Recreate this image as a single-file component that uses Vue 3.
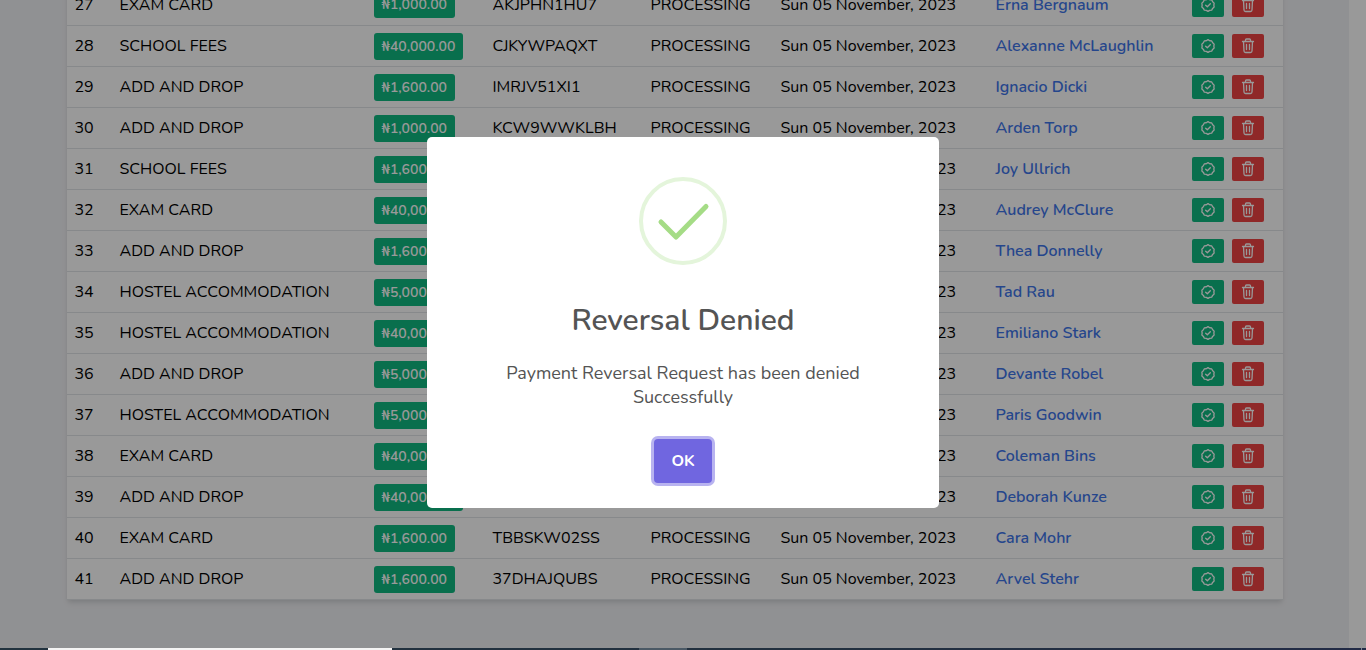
<script setup>
const rows = [
  [27, 'EXAM CARD', '1,000.00', 'AKJPHN1HU7', 'Erna Bergnaum'],
  [28, 'SCHOOL FEES', '40,000.00', 'CJKYWPAQXT', 'Alexanne McLaughlin'],
  [29, 'ADD AND DROP', '1,600.00', 'IMRJV51XI1', 'Ignacio Dicki'],
  [30, 'ADD AND DROP', '1,000.00', 'KCW9WWKLBH', 'Arden Torp'],
  [31, 'SCHOOL FEES', '1,600.00', '', 'Joy Ullrich'],
  [32, 'EXAM CARD', '40,000.00', '', 'Audrey McClure'],
  [33, 'ADD AND DROP', '1,600.00', '', 'Thea Donnelly'],
  [34, 'HOSTEL ACCOMMODATION', '5,000.00', '', 'Tad Rau'],
  [35, 'HOSTEL ACCOMMODATION', '40,000.00', '', 'Emiliano Stark'],
  [36, 'ADD AND DROP', '5,000.00', '', 'Devante Robel'],
  [37, 'HOSTEL ACCOMMODATION', '5,000.00', '', 'Paris Goodwin'],
  [38, 'EXAM CARD', '40,000.00', '', 'Coleman Bins'],
  [39, 'ADD AND DROP', '40,000.00', '', 'Deborah Kunze'],
  [40, 'EXAM CARD', '1,600.00', 'TBBSKW02SS', 'Cara Mohr'],
  [41, 'ADD AND DROP', '1,600.00', '37DHAJQUBS', 'Arvel Stehr'],
].map(([id, purpose, amount, reference, student]) => ({ id, purpose, amount, reference, student }))
</script>

<template>
  <div class="screen">
    <div class="viewport">
      <main class="page">
        <div class="card">
          <table>
            <colgroup>
              <col class="c-id" /><col class="c-purpose" /><col class="c-amount" /><col class="c-ref" />
              <col class="c-status" /><col class="c-date" /><col class="c-student" /><col />
            </colgroup>
            <tbody>
              <tr v-for="row in rows" :key="row.id">
                <td>{{ row.id }}</td>
                <td>{{ row.purpose }}</td>
                <td><span class="amount">₦{{ row.amount }}</span></td>
                <td>{{ row.reference }}</td>
                <td>PROCESSING</td>
                <td>Sun 05 November, 2023</td>
                <td><a href="#">{{ row.student }}</a></td>
                <td>
                  <div class="actions">
                    <button class="approve" type="button" aria-label="Approve">
                      <svg viewBox="0 0 24 24" width="16" height="16">
                        <path d="M12 2.5l2.6 1.6 3 .3 1.4 2.7 2.2 2.1-.4 3 .4 2.9-2.3 2-1.4 2.7-3 .2L12 21.5 9.500 20l-3-.2-1.400-2.700-2.300-2 .4-2.900-.4-3L5 7.100l1.400-2.700 3-.3z" />
                        <path d="M8.500 12.300l2.500 2.300 4.500-4.600" />
                      </svg>
                    </button>
                    <button class="deny" type="button" aria-label="Deny">
                      <svg viewBox="0 0 16 16" width="16" height="16">
                        <path d="M2.500 3.500h11M5.500 3.500V2q0-1 1-1h3q1 0 1 1v1.500M3.500 3.500l.5 9.500q.1 1.500 1.500 1.500h5q1.400 0 1.500-1.500l.5-9.500M6.500 6.500v5M9.500 6.500v5" />
                      </svg>
                    </button>
                  </div>
                </td>
              </tr>
            </tbody>
          </table>
        </div>
      </main>
      <div class="gutter"></div>
    </div>
    <div class="taskbar">
      <span class="start"></span><span class="search"></span><span class="pinned"></span><span class="active"></span><span class="tray"></span>
    </div>
    <div class="backdrop">
      <div class="dialog" role="dialog" aria-modal="true" aria-labelledby="dialog-title">
        <svg class="success" viewBox="0 0 88 88" width="88" height="88">
          <circle cx="44" cy="44" r="42" />
          <path d="M22 45l15 15 30-30.500" />
        </svg>
        <h2 id="dialog-title">Reversal Denied</h2>
        <p>Payment Reversal Request has been denied Successfully</p>
        <button class="ok" type="button">OK</button>
      </div>
    </div>
  </div>
</template>

<style>
body { margin: 0; }
</style>

<style scoped>
* { box-sizing: border-box; }
.screen {
  height: 100vh;
  display: flex;
  flex-direction: column;
  overflow: hidden;
  font-family: Nunito, "Open Sans", "Noto Sans", sans-serif;
  font-size: 16px;
  line-height: 24px;
  color: #000;
}
.viewport { flex: 1; min-height: 0; display: flex; background: #f1f2f5; }
.page {
  flex: 1;
  min-width: 0;
  display: flex;
  flex-direction: column;
  justify-content: flex-end;
  align-items: center;
  padding: 0 32px 48px;
}
.gutter { width: 17px; background: #fff; }
.card {
  width: 100%;
  max-width: 1216px;
  background: #fff;
  box-shadow: 0 4px 6px -1px rgba(0, 0, 0, 0.1), 0 2px 4px -1px rgba(0, 0, 0, 0.06);
}
table { width: 100%; table-layout: fixed; border-collapse: collapse; }
.c-id { width: 45px; }
.c-purpose { width: 254px; }
.c-amount { width: 119px; }
.c-ref { width: 158px; }
.c-status { width: 130px; }
.c-date { width: 215px; }
.c-student { width: 196px; }
td {
  height: 41px;
  padding: 0 8px;
  border-bottom: 1px solid #e2e4e8;
  font-weight: 400;
  white-space: nowrap;
}
a { color: #3f76ea; text-decoration: none; font-weight: 600; }
.amount {
  display: block;
  width: max-content;
  padding: 0 8px;
  border-radius: 3px;
  background: #10b981;
  color: #fff;
  font-size: 14px;
  font-weight: 600;
  line-height: 27px;
}
.actions { display: flex; gap: 8px; }
.actions button {
  display: flex;
  align-items: center;
  justify-content: center;
  width: 32px;
  height: 24px;
  padding: 0;
  border: 0;
  border-radius: 2px;
  color: #fff;
}
.actions svg { fill: none; stroke: currentColor; stroke-linecap: round; stroke-linejoin: round; stroke-width: 1.3; }
.actions .approve svg { stroke-width: 2; }
.approve { background: #10b981; }
.deny { background: #ef4444; }
.taskbar { display: flex; height: 2px; background: linear-gradient(90deg, #22333f, #22303f 60%, #222b46); }
.start { width: 48px; }
.search { width: 344px; background: #f4f4f4; }
.pinned { width: 247px; }
.active { width: 48px; background: #4b5965; }
.tray { flex: 1; margin-right: 4px; border-right: 1px solid #7d8596; }
.backdrop {
  position: fixed;
  inset: 0 0 2px;
  display: flex;
  align-items: center;
  justify-content: center;
  padding-bottom: 3px;
  background: rgba(0, 0, 0, 0.4);
}
.dialog {
  width: 512px;
  max-width: 100%;
  padding: 40px 32px 25px;
  border-radius: 5px;
  background: #fff;
  display: flex;
  flex-direction: column;
  align-items: center;
  color: #545454;
  text-align: center;
}
.success { fill: none; stroke-linecap: round; stroke-linejoin: round; }
.success circle { stroke: #e4f5db; stroke-width: 4; }
.success path { stroke: #a5dc86; stroke-width: 5; }
h2 { margin: 36px 0 0; font-size: 30px; font-weight: 600; line-height: 40px; }
p { max-width: 400px; margin: 20px 0 0; font-size: 18px; font-weight: 400; line-height: 24px; }
.ok {
  margin-top: 30px;
  width: 58px;
  height: 44px;
  padding: 0;
  border: 0;
  border-radius: 4px;
  background: #7066e0;
  color: #fff;
  box-shadow: 0 0 0 3px #b8b3f0;
  font: inherit;
  font-weight: 700;
}
</style>
